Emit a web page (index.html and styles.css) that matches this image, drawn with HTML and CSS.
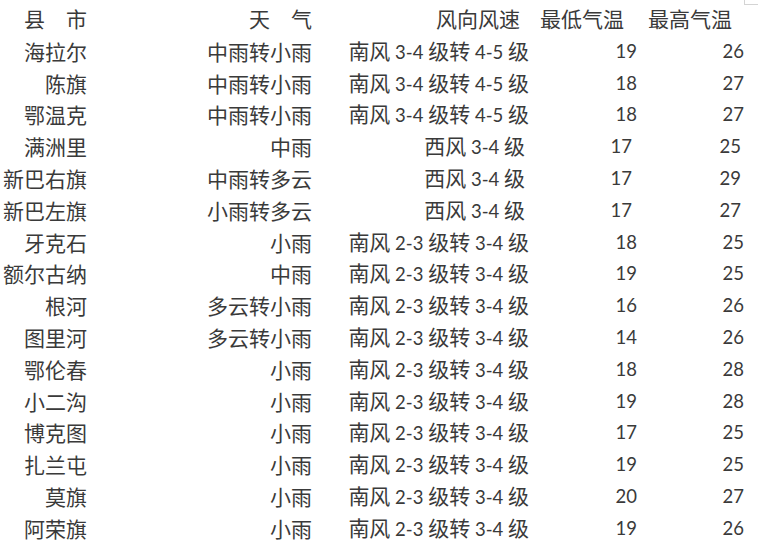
FILE: index.html
```html
<!DOCTYPE html>
<html lang="zh-CN">
<head>
<meta charset="utf-8">
<title>天气预报</title>
<link rel="stylesheet" href="styles.css">
</head>
<body>
<div class="corner"></div>
<div class="table">
  <div class="row head">
    <div class="c1">县　市</div><div class="c2">天　气</div><div class="c3">风向风速</div><div class="c4">最低气温</div><div class="c5">最高气温</div>
  </div>
  <div class="row"><div class="c1">海拉尔</div><div class="c2">中雨转小雨</div><div class="c3">南风<span class="n"> 3-4 </span>级转<span class="n"> 4-5 </span>级</div><div class="c4 n">19</div><div class="c5 n">26</div></div>
  <div class="row"><div class="c1">陈旗</div><div class="c2">中雨转小雨</div><div class="c3">南风<span class="n"> 3-4 </span>级转<span class="n"> 4-5 </span>级</div><div class="c4 n">18</div><div class="c5 n">27</div></div>
  <div class="row"><div class="c1">鄂温克</div><div class="c2">中雨转小雨</div><div class="c3">南风<span class="n"> 3-4 </span>级转<span class="n"> 4-5 </span>级</div><div class="c4 n">18</div><div class="c5 n">27</div></div>
  <div class="row shift"><div class="c1">满洲里</div><div class="c2">中雨</div><div class="c3">西风<span class="n"> 3-4 </span>级</div><div class="c4 n">17</div><div class="c5 n">25</div></div>
  <div class="row shift"><div class="c1">新巴右旗</div><div class="c2">中雨转多云</div><div class="c3">西风<span class="n"> 3-4 </span>级</div><div class="c4 n">17</div><div class="c5 n">29</div></div>
  <div class="row shift"><div class="c1">新巴左旗</div><div class="c2">小雨转多云</div><div class="c3">西风<span class="n"> 3-4 </span>级</div><div class="c4 n">17</div><div class="c5 n">27</div></div>
  <div class="row"><div class="c1">牙克石</div><div class="c2">小雨</div><div class="c3">南风<span class="n"> 2-3 </span>级转<span class="n"> 3-4 </span>级</div><div class="c4 n">18</div><div class="c5 n">25</div></div>
  <div class="row"><div class="c1">额尔古纳</div><div class="c2">中雨</div><div class="c3">南风<span class="n"> 2-3 </span>级转<span class="n"> 3-4 </span>级</div><div class="c4 n">19</div><div class="c5 n">25</div></div>
  <div class="row"><div class="c1">根河</div><div class="c2">多云转小雨</div><div class="c3">南风<span class="n"> 2-3 </span>级转<span class="n"> 3-4 </span>级</div><div class="c4 n">16</div><div class="c5 n">26</div></div>
  <div class="row"><div class="c1">图里河</div><div class="c2">多云转小雨</div><div class="c3">南风<span class="n"> 2-3 </span>级转<span class="n"> 3-4 </span>级</div><div class="c4 n">14</div><div class="c5 n">26</div></div>
  <div class="row"><div class="c1">鄂伦春</div><div class="c2">小雨</div><div class="c3">南风<span class="n"> 2-3 </span>级转<span class="n"> 3-4 </span>级</div><div class="c4 n">18</div><div class="c5 n">28</div></div>
  <div class="row"><div class="c1">小二沟</div><div class="c2">小雨</div><div class="c3">南风<span class="n"> 2-3 </span>级转<span class="n"> 3-4 </span>级</div><div class="c4 n">19</div><div class="c5 n">28</div></div>
  <div class="row"><div class="c1">博克图</div><div class="c2">小雨</div><div class="c3">南风<span class="n"> 2-3 </span>级转<span class="n"> 3-4 </span>级</div><div class="c4 n">17</div><div class="c5 n">25</div></div>
  <div class="row"><div class="c1">扎兰屯</div><div class="c2">小雨</div><div class="c3">南风<span class="n"> 2-3 </span>级转<span class="n"> 3-4 </span>级</div><div class="c4 n">19</div><div class="c5 n">25</div></div>
  <div class="row"><div class="c1">莫旗</div><div class="c2">小雨</div><div class="c3">南风<span class="n"> 2-3 </span>级转<span class="n"> 3-4 </span>级</div><div class="c4 n">20</div><div class="c5 n">27</div></div>
  <div class="row"><div class="c1">阿荣旗</div><div class="c2">小雨</div><div class="c3">南风<span class="n"> 2-3 </span>级转<span class="n"> 3-4 </span>级</div><div class="c4 n">19</div><div class="c5 n">26</div></div>
</div>
</body>
</html>
```

FILE: styles.css
```css
html, body {
  margin: 0;
  padding: 0;
  background: #ffffff;
}
body {
  position: relative;
  width: 758px;
  height: 547px;
  overflow: hidden;
  color: #3a3a3a;
  font-family: "Noto Sans CJK SC", "Noto Sans", sans-serif;
  font-size: 21px;
}
.corner {
  position: absolute;
  left: 744px;
  top: -1px;
  width: 16px;
  height: 4px;
  border: 1px solid #d4d4d4;
}
.table {
  padding-top: 3px;
}
.row {
  display: grid;
  grid-template-columns: 87px 225px 217px 108px 107px;
  height: 31.8px;
  align-items: center;
  white-space: nowrap;
}
.row > div {
  text-align: right;
  line-height: 31.8px;
}
.n {
  font-family: "Lato", "Noto Sans", sans-serif;
  font-size: 18.5px;
}
.head .c3 { padding-right: 9px; }
.head .c4 { padding-right: 13px; }
.head .c5 { padding-right: 12px; }
.shift .c3 { padding-right: 4px; }
.shift .c4 { padding-right: 5px; }
.shift .c5 { padding-right: 3px; }
```
